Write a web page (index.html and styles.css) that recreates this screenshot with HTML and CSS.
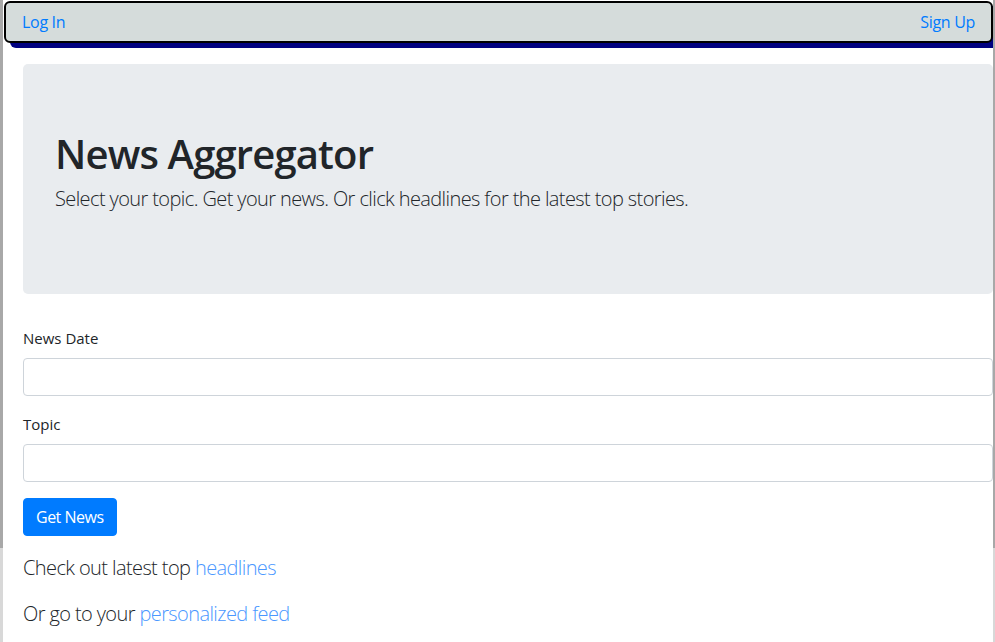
FILE: index.html
```html
<!DOCTYPE html>
<html lang="en">
<head>
<meta charset="utf-8">
<title>News Aggregator</title>
<link rel="stylesheet" href="styles.css">
</head>
<body>
<div class="page">
  <nav class="navbar">
    <a class="nav-link" href="#">Log In</a>
    <a class="nav-link" href="#">Sign Up</a>
  </nav>
  <main class="content">
    <section class="jumbotron">
      <h1 class="title">News Aggregator</h1>
      <p class="lead">Select your topic. Get your news. Or click headlines for the latest top stories.</p>
    </section>
    <form class="news-form">
      <div class="form-group">
        <label class="form-label" for="date">News Date</label>
        <input class="form-control" id="date" type="text">
      </div>
      <div class="form-group">
        <label class="form-label" for="topic">Topic</label>
        <input class="form-control" id="topic" type="text">
      </div>
      <button class="btn" type="button">Get News</button>
    </form>
    <p class="lead note">Check out latest top <a class="link" href="#">headlines</a></p>
    <p class="lead note">Or go to your <a class="link" href="#">personalized feed</a></p>
  </main>
</div>
</body>
</html>
```

FILE: styles.css
```css
* { box-sizing: border-box; }
html, body { margin: 0; padding: 0; background: #fff; }
body {
  font-family: "Open Sans", "Noto Sans", sans-serif;
  font-size: 16px;
  line-height: 1.5;
  color: #212529;
}
.page {
  min-height: 100vh;
  border-left: 3px solid #a8a8a8;
  border-right: 2px solid #c4c4c4;
  border-image: linear-gradient(to bottom, #a8a8a8 0, #a8a8a8 547px, #d8d8d8 547px, #d8d8d8 100%) 1;
  border-top: 0;
  border-bottom: 0;
  overflow: hidden;
}
.navbar {
  margin: 1px 0 0 1px;
  height: 42px;
  border: 2px solid #000;
  border-radius: 6px;
  background: #d5dcdb;
  box-shadow: 6px 5px 0 #000080;
  display: flex;
  align-items: center;
  justify-content: space-between;
  padding: 0 16px 0 16px;
}
.nav-link {
  color: #007bff;
  text-decoration: none;
  font-size: 16px;
  letter-spacing: -0.3px;
}
.content {
  padding: 21px 0 0 20px;
}
.jumbotron {
  background: #e9ecef;
  border-radius: 5px;
  padding: 64px 32px;
  margin-bottom: 32px;
}
.title {
  margin: 0 0 8px;
  font-size: 40px;
  font-weight: 600;
  letter-spacing: -0.85px;
  line-height: 1.2;
  padding-top: 2px;
  margin-bottom: 6px;
}
.lead {
  margin: 0 0 16px;
  font-size: 20px;
  font-weight: 300;
  line-height: 1.5;
  letter-spacing: -0.6px;
}
.form-group { margin-bottom: 16px; }
.form-label {
  display: block;
  margin-bottom: 8px;
  font-size: 15px;
  line-height: 24px;
}
.form-control {
  display: block;
  width: 100%;
  height: 38px;
  padding: 6px 12px;
  font: inherit;
  border: 1px solid #ced4da;
  border-radius: 4px;
  background: #fff;
}
.btn {
  display: inline-block;
  height: 38px;
  padding: 6px 12px;
  font: inherit;
  font-size: 16px;
  line-height: 24px;
  letter-spacing: -0.5px;
  color: #fff;
  background: #007bff;
  border: 1px solid #007bff;
  border-radius: 4px;
}
.news-form { margin-bottom: 17px; }
.note { margin-bottom: 16px; }
.link { color: #4a97ff; text-decoration: none; }
```
